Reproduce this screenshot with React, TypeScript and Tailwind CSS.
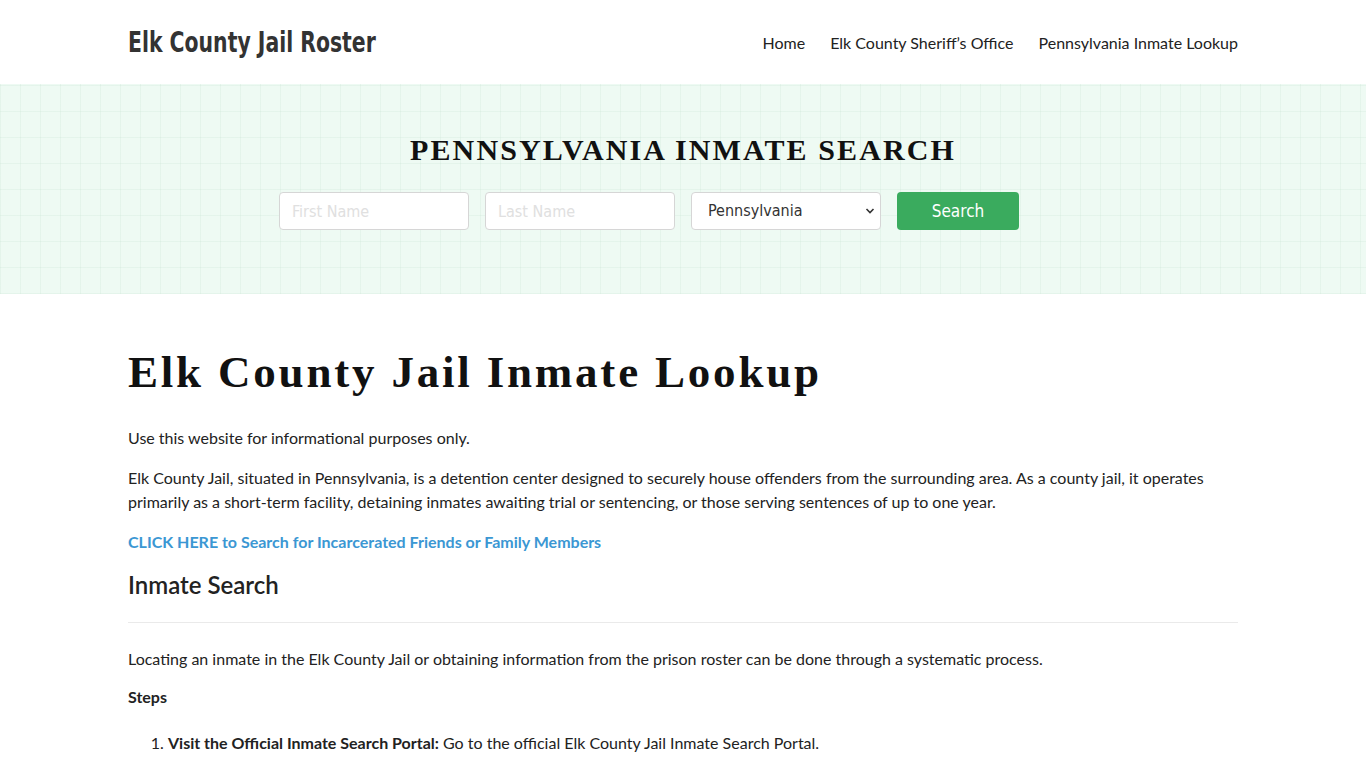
import React from "react";

const condensed = { fontFamily: '"DejaVu Sans Condensed", "DejaVu Sans", sans-serif', fontStretch: "condensed" } as React.CSSProperties;

export default function App() {
  return (
    <div className="min-h-screen bg-white text-[#222]" style={{ fontFamily: 'Lato, "Noto Sans", sans-serif' }}>
      <header className="h-[84px] bg-white">
        <div className="mx-auto flex h-full w-[1110px] items-center justify-between">
          <a
            className="inline-block origin-left scale-x-[0.81] whitespace-nowrap pt-[2px] text-[28px] font-bold leading-none text-[#333]"
            style={condensed}
          >
            Elk County Jail Roster
          </a>
          <nav className="flex items-center gap-[25px] pt-[2px] text-[16px] text-[#222]">
            <a>Home</a>
            <a>Elk County Sheriff’s Office</a>
            <a>Pennsylvania Inmate Lookup</a>
          </nav>
        </div>
      </header>

      <section
        className="h-[210px] bg-[#eefaf3] pt-[48px]"
        style={{
          backgroundImage:
            "repeating-linear-gradient(90deg, rgba(170,210,185,0.14) 0px, rgba(170,210,185,0.14) 1px, transparent 1px, transparent 20px), repeating-linear-gradient(0deg, rgba(170,210,185,0.14) 0px, rgba(170,210,185,0.14) 1px, transparent 1px, transparent 26px)",
        }}
      >
        <h2
          className="text-center text-[30px] font-bold leading-[36px] tracking-[2.1px] text-[#111]"
          style={{ fontFamily: '"Liberation Serif", "DejaVu Serif", serif' }}
        >
          PENNSYLVANIA INMATE SEARCH
        </h2>
        <form className="mt-[24px] flex justify-center gap-[16px] pr-[68px]" onSubmit={(e) => e.preventDefault()}>
          <input
            placeholder="First Name"
            className="h-[38px] w-[190px] rounded-[4px] border border-[#d6d6d6] bg-white px-[12px] text-[16px] text-[#444] placeholder:text-[#e0e0e0] outline-none"
            style={condensed}
          />
          <input
            placeholder="Last Name"
            className="h-[38px] w-[190px] rounded-[4px] border border-[#d6d6d6] bg-white px-[12px] text-[16px] text-[#444] placeholder:text-[#e0e0e0] outline-none"
            style={condensed}
          />
          <div className="relative h-[38px] w-[190px]">
            <select
              defaultValue="Pennsylvania"
              className="h-full w-full appearance-none rounded-[4px] border border-[#d6d6d6] bg-white pl-[16px] text-[16px] text-[#333] outline-none"
              style={condensed}
            >
              <option>Pennsylvania</option>
            </select>
            <svg className="pointer-events-none absolute right-[6px] top-[15px]" width="10" height="8" viewBox="0 0 10 8">
              <path d="M1.5 2 L5 5.5 L8.5 2" fill="none" stroke="#333" strokeWidth="1.6" />
            </svg>
          </div>
          <button
            className="h-[38px] w-[122px] rounded-[4px] bg-[#3aab5e] pt-[1px] text-[17px] text-white"
            style={condensed}
          >
            Search
          </button>
        </form>
      </section>

      <main className="mx-auto w-[1110px] pt-[53px] text-[16px] leading-[24px]">
        <h1
          className="text-[45px] font-bold leading-[50px] tracking-[2.8px] text-[#111]"
          style={{ fontFamily: '"Liberation Serif", "DejaVu Serif", serif' }}
        >
          Elk County Jail Inmate Lookup
        </h1>
        <p className="mt-[29px]">Use this website for informational purposes only.</p>
        <p className="mt-[16px]">
          Elk County Jail, situated in Pennsylvania, is a detention center designed to securely house offenders from the surrounding area. As a county jail, it operates primarily as a short-term facility, detaining inmates awaiting trial or sentencing, or those serving sentences of up to one year.
        </p>
        <p className="mt-[16px]">
          <a className="font-bold text-[#3b97d3]">CLICK HERE to Search for Incarcerated Friends or Family Members</a>
        </p>
        <h2 className="mt-[16px] text-[24px] font-semibold leading-[29px] text-[#222]">Inmate Search</h2>
        <hr className="mt-[23px] border-0 border-t border-[#eaeaea]" />
        <p className="mt-[24px]">
          Locating an inmate in the Elk County Jail or obtaining information from the prison roster can be done through a systematic process.
        </p>
        <p className="mt-[14px] font-bold">Steps</p>
        <ol className="mt-[22px] list-decimal pl-[40px]">
          <li>
            <strong>Visit the Official Inmate Search Portal:</strong> Go to the official Elk County Jail Inmate Search Portal.
          </li>
        </ol>
      </main>
    </div>
  );
}
